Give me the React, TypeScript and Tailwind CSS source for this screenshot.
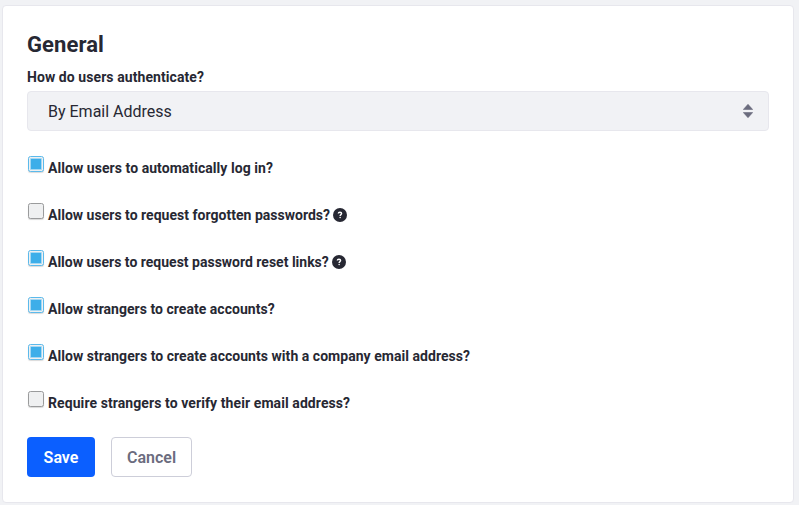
const rows = [
  { label: "Allow users to automatically log in?", checked: true, help: false, tracking: "tracking-[0.055px]" },
  { label: "Allow users to request forgotten passwords?", checked: false, help: true, tracking: "tracking-[0.02px]" },
  { label: "Allow users to request password reset links?", checked: true, help: true, tracking: "tracking-normal" },
  { label: "Allow strangers to create accounts?", checked: true, help: false, tracking: "tracking-[0.03px]" },
  { label: "Allow strangers to create accounts with a company email address?", checked: true, help: false, tracking: "tracking-[0.04px]" },
  { label: "Require strangers to verify their email address?", checked: false, help: false, tracking: "tracking-[0.085px]" },
];

function Checkbox({ checked }: { checked: boolean }) {
  return checked ? (
    <span className="flex h-4 w-4 shrink-0 items-center justify-center rounded-[2.5px] border border-[#5bbaec] bg-[#eff0f1] shadow-[0_1px_1px_#00000026]">
      <span className="h-3 w-3 rounded-[1px] border border-[#a5d8f3] bg-[#3daee9]" />
    </span>
  ) : (
    <span className="h-4 w-4 shrink-0 rounded-[2.5px] border border-[#9a9b9c] bg-[#eff0f1] shadow-[0_1px_1px_#00000026]" />
  );
}

function Help() {
  return (
    <svg className="ml-[3px] h-[14px] w-[14px]" viewBox="0 0 14 14">
      <circle cx="7" cy="7" r="7" fill="#272833" />
      <path d="M5.3 5.5C5.4 3.8 8.6 3.8 8.6 5.5C8.6 6.6 7.1 6.6 7.1 7.9" fill="none" stroke="white" strokeWidth="1.4" />
      <circle cx="7.1" cy="9.5" r=".75" fill="white" />
    </svg>
  );
}

export default function App() {
  return (
    <div className="h-[505px] w-[799px] bg-[#f1f2f5] pl-[2px] pt-[5px] font-[Roboto,sans-serif] text-[#272833]">
      <main className="h-[498px] w-[792px] rounded border border-[#e7e7ed] bg-white px-6 pt-[23px]">
        <h1 className="h-[31px] text-[22px] leading-[31px] font-bold tracking-[0.08px]">General</h1>
        <div className="mt-[7px] h-[21px] text-sm leading-[21px] font-bold tracking-[0.075px]">How do users authenticate?</div>
        <div className="mt-[3px] flex h-10 w-[742px] items-center justify-between rounded border border-[#e7e7ed] bg-[#f1f2f5] pr-[15px] pl-5">
          <span className="pt-[2px]">By Email Address</span>
          <svg className="h-[14px] w-[10px]" viewBox="0 0 10 14" fill="#6b6c7e" stroke="#6b6c7e" strokeWidth=".6" strokeLinejoin="round"><path d="M5 .3L9.7 5.5H.3ZM.3 8.5H9.7L5 13.7Z" /></svg>
        </div>
        <div className="mt-[25px]">
          {rows.map((r) => (
            <div key={r.label} className="flex h-[47px] items-start pl-[1px]">
              <Checkbox checked={r.checked} />
              <span className={`ml-1 pt-[2px] text-sm leading-[21px] font-bold ${r.tracking}`}>{r.label}</span>
              {r.help && <span className="pt-[5px]"><Help /></span>}
            </div>
          ))}
        </div>
        <div className="-mt-px flex gap-4 font-semibold">
          <button className="h-10 w-[68px] rounded bg-[#0b5fff] pt-[2px] text-white">Save</button>
          <button className="h-10 w-[81px] rounded border border-[#cdced9] pt-[2px] text-[#6b6c7e]">Cancel</button>
        </div>
      </main>
    </div>
  );
}
